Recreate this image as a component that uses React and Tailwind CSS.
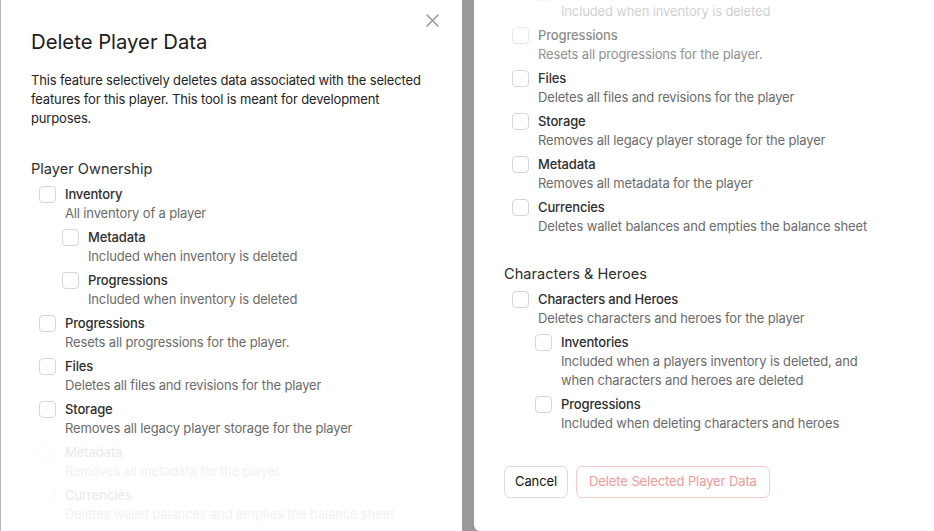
import React from 'react';

const ownership = [
  {
    label: 'Inventory',
    desc: 'All inventory of a player',
    children: [
      { label: 'Metadata', desc: 'Included when inventory is deleted' },
      { label: 'Progressions', desc: 'Included when inventory is deleted' },
    ],
  },
  { label: 'Progressions', desc: 'Resets all progressions for the player.' },
  { label: 'Files', desc: 'Deletes all files and revisions for the player' },
  { label: 'Storage', desc: 'Removes all legacy player storage for the player' },
  { label: 'Metadata', desc: 'Removes all metadata for the player' },
  { label: 'Currencies', desc: 'Deletes wallet balances and empties the balance sheet' },
];

const heroes = [
  {
    label: 'Characters and Heroes',
    desc: 'Deletes characters and heroes for the player',
    children: [
      {
        label: 'Inventories',
        desc: (
          <>
            Included when a players inventory is deleted, and
            <br />
            when characters and heroes are deleted
          </>
        ),
      },
      { label: 'Progressions', desc: 'Included when deleting characters and heroes' },
    ],
  },
];

function Checkbox() {
  return <span className="mt-px block h-[17px] w-[17px] shrink-0 rounded-[4px] border border-[#d6d6d6] bg-white" />;
}

function Item({ item, nested }) {
  return (
    <div className={`flex flex-col gap-[5px] ${nested ? 'pl-[23px]' : ''}`}>
      <div className="flex gap-[9px]">
        <Checkbox />
        <div className="tracking-[-0.15px]">
          <div className="text-[13px] leading-[19px] font-medium text-[#2e2e2e]">{item.label}</div>
          <div className="text-[13px] leading-[19px] text-[#6b6b6b]">{item.desc}</div>
        </div>
      </div>
      {item.children && item.children.map((c, i) => <Item key={i} item={c} nested />)}
    </div>
  );
}

function Section({ title, items, className }) {
  return (
    <div className={className}>
      <h3 className="text-[14.6px] leading-[22px] text-[#2e2e2e]">{title}</h3>
      <div className="mt-[5px] flex flex-col gap-[5px] pl-[8px]">
        {items.map((it, i) => <Item key={i} item={it} />)}
      </div>
    </div>
  );
}

/* the dialog body, shown twice at two scroll positions */
function DialogBody({ className }) {
  return (
    <div className={`px-[30px] pt-[28px] ${className || ''}`}>
      <h2 className="text-[20.3px] leading-[28px] text-[#1b1b1b]">Delete Player Data</h2>
      <p className="mt-[15px] text-[13px] leading-[19px] tracking-[-0.15px] text-[#242424]">
        This feature selectively deletes data associated with the selected features for this player. This tool is meant for development purposes.
      </p>
      <Section title="Player Ownership" items={ownership} className="mt-[30px]" />
      <Section title="Characters & Heroes" items={heroes} className="mt-[27px]" />
      <div className="mt-[33px] flex gap-[8px]">
        <button className="h-[32px] rounded-[6px] border border-[#dcdcdc] bg-white px-[10px] text-[13px] tracking-[-0.1px] text-[#111]">
          Cancel
        </button>
        <button className="h-[32px] rounded-[6px] border border-[#f7cccc] bg-white px-[12px] text-[13px] tracking-[-0.1px] text-[#f29a9a]">
          Delete Selected Player Data
        </button>
      </div>
    </div>
  );
}

export default function App() {
  return (
    <div
      className="flex h-[531px] w-[934px] overflow-hidden bg-[#999999]"
      style={{ fontFamily: 'Inter, "Noto Sans", sans-serif' }}
    >
      {/* top of the dialog */}
      <div className="relative h-full w-[462px] shrink-0 overflow-hidden border-l border-[#b8b8b8] bg-white">
        <button className="absolute right-[23px] top-[14px] text-[#9a9a9a]">
          <svg width="13" height="13" viewBox="0 0 13 13" fill="none" stroke="currentColor" strokeWidth="1.6" strokeLinecap="round">
            <path d="M1 1l11 11M12 1L1 12" />
          </svg>
        </button>
        <DialogBody />
        <div className="absolute -left-px right-0 top-[441px] bottom-0 bg-white/90" />
      </div>

      {/* bottom of the dialog, scrolled */}
      <div className="relative ml-[12px] h-full flex-1 overflow-hidden rounded-bl-[6px] bg-white">
        <DialogBody className="-mt-[288px]" />
        <div className="absolute inset-x-0 top-0 h-[80px] bg-linear-to-b from-white/80 to-white/0" />
      </div>
    </div>
  );
}
